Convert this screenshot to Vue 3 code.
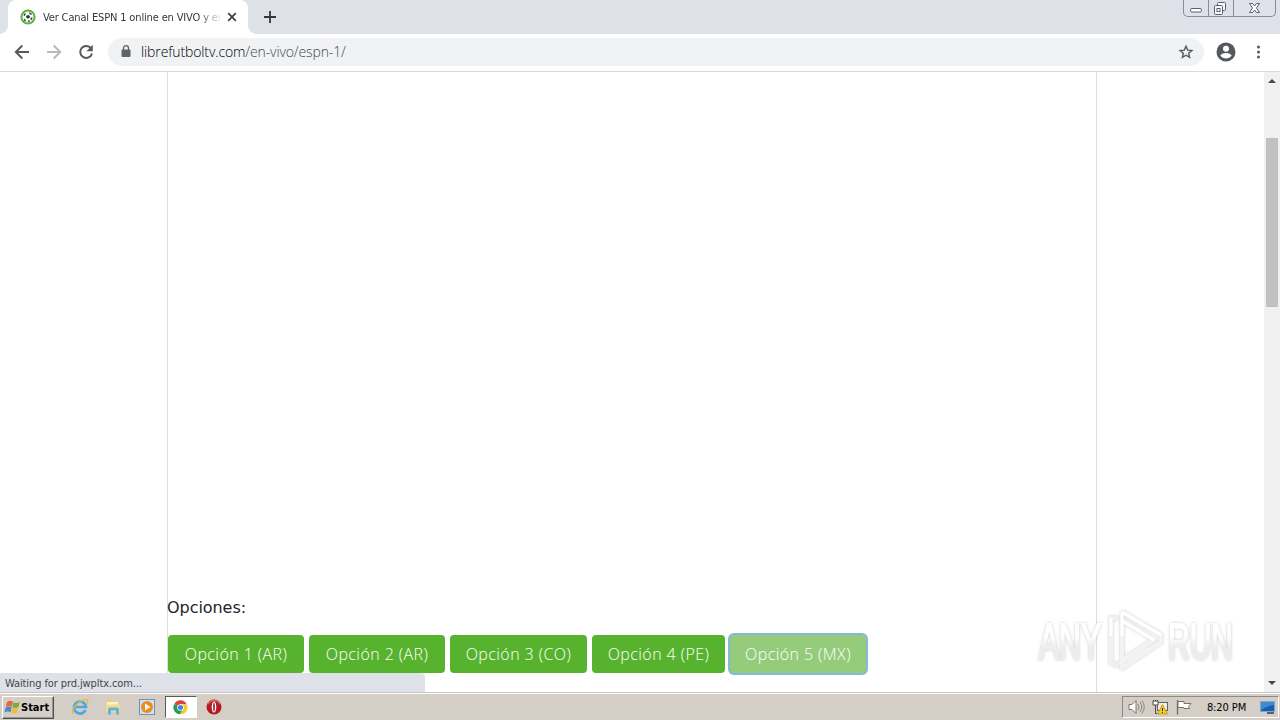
<template>
  <div class="screen">
    <header class="tabstrip">
      <div class="tab">
        <svg class="favicon" width="16" height="16" viewBox="0 0 16 16">
          <circle cx="8" cy="8" r="7.6" fill="#5fac43" />
          <circle cx="8" cy="8" r="5.6" fill="#f6faf4" />
          <path d="M6.300 6.800l1.900-.8 1.700 1-.3 2-2.200.5-1.200-1.200zM3.300 6l1.700-2.100.8 1.200L4.500 7zM9.500 3.200l2.500 1.700-.9 1.100-1.900-1.200zM12.700 8.500l-1.300 2.800-1.100-1.100.9-1.600zM4.100 9.700l1.500 1.400.3 1.600-2.200-1.500zM7.600 11.900l1.900-.6.5 1.300-1.800.5z" fill="#26332a" />
        </svg>
        <span class="tab-title">Ver Canal ESPN 1 online en VIVO y en</span>
        <svg class="tab-close" width="10" height="10" viewBox="0 0 10 10">
          <path d="M1.2 1.2l7.6 7.6M8.8 1.2L1.2 8.8" stroke="#3c4043" stroke-width="1.7" />
        </svg>
        <i class="tab-foot left"></i>
        <i class="tab-foot right"></i>
      </div>
      <svg class="new-tab" width="12" height="12" viewBox="0 0 12 12">
        <path d="M6 0v12M0 6h12" stroke="#34383c" stroke-width="1.8" />
      </svg>
      <div class="window-buttons">
        <svg width="24" height="16" viewBox="0 0 24 16">
          <rect x="6.500" y="8.500" width="11" height="3.500" rx="1.500" fill="#fff" stroke="#596070" />
        </svg>
        <svg width="24" height="16" viewBox="0 0 24 16">
          <rect x="8.500" y="2.500" width="8" height="8" rx="1" fill="#f7f8fa" stroke="#596070" />
          <rect x="5.500" y="5.500" width="8" height="9" rx="1" fill="#f7f8fa" stroke="#596070" />
          <rect x="8" y="8.500" width="3" height="3" fill="#fff" stroke="#596070" />
        </svg>
        <svg width="41" height="16" viewBox="0 0 41 16">
          <path d="M15.500 3.500h3l2 2.500 2-2.500h3l-3 4.500 3 4.500h-3l-2-2.500-2 2.500h-3l3-4.500z" fill="#fff" stroke="#596070" stroke-linejoin="round" />
        </svg>
      </div>
    </header>

    <div class="toolbar">
      <svg class="nav-icon" width="16" height="16" viewBox="0 0 16 16">
        <path d="M15 8H2M8.300 1.500L1.800 8l6.500 6.500" fill="none" stroke="#55585c" stroke-width="1.900" />
      </svg>
      <svg class="nav-icon" width="16" height="16" viewBox="0 0 16 16">
        <path d="M1 8h13M7.700 1.500L14.200 8l-6.500 6.500" fill="none" stroke="#b7b9bc" stroke-width="1.900" />
      </svg>
      <svg class="nav-icon" width="16" height="16" viewBox="0 0 16 16">
        <path d="M13 4.300A6 6 0 1 0 14 9.500" fill="none" stroke="#55585c" stroke-width="2" />
        <path d="M14.800.8v6.400H8.400z" fill="#55585c" />
      </svg>
      <div class="omnibox">
        <svg class="lock" width="10" height="13" viewBox="0 0 10 13">
          <path d="M2.500 5V3.200a2.500 2.500 0 0 1 5 0V5" fill="none" stroke="#5f6368" stroke-width="1.300" />
          <rect x=".5" y="4.500" width="9" height="7.500" rx="1" fill="#5f6368" />
        </svg>
        <span class="url"><span class="host">librefutboltv.com</span><span class="path">/en-vivo/espn-1/</span></span>
        <svg class="star" width="16" height="16" viewBox="0 0 16 16">
          <path d="M8 2.200l1.700 3.900 4.200.4-3.200 2.800.9 4.100L8 11.200l-3.600 2.200.9-4.100-3.200-2.800 4.200-.4z" fill="none" stroke="#55585c" stroke-width="1.400" />
        </svg>
      </div>
      <svg class="avatar" width="20" height="20" viewBox="0 0 20 20">
        <circle cx="10" cy="10" r="9.500" fill="#55585c" />
        <circle cx="10" cy="6.700" r="3" fill="#fff" />
        <path d="M4.300 13.600c1-2 3.500-2.700 5.700-2.700s4.700.7 5.700 2.700a7 7 0 0 1-11.400 0z" fill="#fff" />
      </svg>
      <svg class="kebab" width="4" height="14" viewBox="0 0 4 14">
        <circle v-for="y in [2, 7, 12]" :key="y" cx="2.500" :cy="y" r="1.500" fill="#55585c" />
      </svg>
    </div>

    <div class="viewport">
      <main class="column">
        <p class="label">Opciones:</p>
        <div class="options">
          <button
            v-for="option in options"
            :key="option.text"
            :class="['option', { active: option.active }]"
            :style="{ width: option.width + 'px' }"
          >{{ option.text }}</button>
        </div>
      </main>
      <div class="scrollbar">
        <svg width="8" height="4" viewBox="0 0 8 4"><path d="M0 4l4-4 4 4z" fill="#484848" /></svg>
        <div class="thumb"></div>
        <svg width="8" height="4" viewBox="0 0 8 4"><path d="M0 0l4 4 4-4z" fill="#484848" /></svg>
      </div>
      <div class="status">Waiting for prd.jwpltx.com...</div>
      <svg class="watermark" width="206" height="76" viewBox="0 0 206 76">
        <defs>
          <filter id="soft" x="-10%" y="-10%" width="120%" height="120%">
            <feDropShadow dx="0" dy="0" stdDeviation="1.500" flood-color="#777" flood-opacity=".4" />
          </filter>
          <linearGradient id="fade" x1="0" y1="0" x2="0" y2="1">
            <stop offset=".4" stop-color="#fff" />
            <stop offset=".6" stop-color="#ededed" />
          </linearGradient>
        </defs>
        <g filter="url(#soft)">
          <text x="4" y="55" textLength="62" lengthAdjust="spacingAndGlyphs" class="mark">ANY</text>
          <text x="133" y="55" textLength="65" lengthAdjust="spacingAndGlyphs" class="mark">RUN</text>
          <path d="M83 14H76V59L82 61L122 40" fill="none" stroke="#f1f1f1" stroke-width="4" />
          <path d="M87 8L126 31V38L87 64V56L119 36L87 16V54" fill="none" stroke="#f3f3f3" stroke-width="4" stroke-linejoin="round" />
          <path d="M87 8L126 31M87 17L119 36M87 8V32M76 14V32" fill="none" stroke="#fff" stroke-width="3" />
        </g>
      </svg>
    </div>

    <footer class="taskbar">
      <div class="start">
        <svg width="18" height="17" viewBox="0 0 18 17">
          <path d="M3 3c2-1.500 4-1.500 6-.2L7.800 7.800C5.800 6.500 3.700 6.600 1.700 8z" fill="#e7683b" />
          <path d="M9.500 3.200c2 1 4 1 6.200-.3L14.500 8c-2 1.300-4.200 1.200-6.100.2z" fill="#78ad43" />
          <path d="M1.600 8.500c2-1.400 4.100-1.500 6.100-.2l-1.200 5C4.500 12 2.400 12.100.4 13.500z" fill="#4b8ac7" />
          <path d="M8.300 8.800c2 1 4.100 1 6.100-.2l-1.200 5c-2 1.300-4.200 1.200-6.100.1z" fill="#edbd3d" />
        </svg>
        <span>Start</span>
      </div>
      <nav class="launch">
        <div class="launch-item">
          <svg width="18" height="18" viewBox="0 0 18 18">
            <path d="M14.500 12A6 6 0 1 1 15 9H4" fill="none" stroke="#4aa9dd" stroke-width="2.700" />
            <path d="M2 16C-1 12 9 1 15.500 1.500c2 .2 1.500 3 .3 4.700" fill="none" stroke="#e3b84a" stroke-width="1.300" />
          </svg>
        </div>
        <div class="launch-item">
          <svg width="18" height="18" viewBox="0 0 18 18">
            <path d="M2 2h5l1 1.500h7V14H2z" fill="#e9cf75" />
            <path d="M3 4h11v3H3z" fill="#fff3bb" />
            <path d="M2 6.500h14V14H2z" fill="#f0dc91" />
            <path d="M4 16.500v-5q0-2 2-2h7q2 0 2 2v5h-3v-4H7v4z" fill="#64b4d8" />
          </svg>
        </div>
        <div class="launch-item">
          <svg width="18" height="18" viewBox="0 0 18 18">
            <rect x="1.500" y="1.500" width="15" height="15" fill="#cfe2f0" stroke="#6696bd" />
            <circle cx="9" cy="9" r="6" fill="#f18a1b" />
            <path d="M7 5.500v7l5.500-3.500z" fill="#fff" />
          </svg>
        </div>
        <div class="launch-item pressed">
          <svg width="15" height="15" viewBox="0 0 16 16">
            <path d="M8 8L1.500 4.200A7.200 7.200 0 0 1 14.500 4.500H8z" fill="#dc4437" />
            <path d="M8 8L1.500 4.200A7.200 7.200 0 0 0 7.500 15.200L11 9.500z" fill="#249b59" />
            <path d="M8 4.500h6.500A7.200 7.200 0 0 1 7.500 15.200L11 9.700z" fill="#f7c92f" />
            <circle cx="8" cy="8" r="3.500" fill="#fff" />
            <circle cx="8" cy="8" r="2.700" fill="#4285d8" />
          </svg>
        </div>
        <div class="launch-item">
          <svg width="16" height="16" viewBox="0 0 16 16">
            <circle cx="8" cy="8" r="7.500" fill="#b51a22" />
            <path d="M2 5a7 7 0 0 1 12 0" fill="none" stroke="#df6264" stroke-width="1.500" />
            <ellipse cx="8" cy="8" rx="2.300" ry="5.500" fill="#fff" />
            <ellipse cx="8" cy="8" rx=".8" ry="4.500" fill="#8b1119" />
          </svg>
        </div>
      </nav>
      <div class="tray">
        <svg width="17" height="16" viewBox="0 0 17 16">
          <path d="M1 5.500h3l4-4v13l-4-4H1z" fill="#fff" stroke="#77746f" />
          <path d="M10 5q2 3 0 6M12 3q3.500 5 0 10M14 1.500q4.500 6.500 0 13" fill="none" stroke="#8b8883" />
        </svg>
        <svg width="17" height="16" viewBox="0 0 17 16">
          <rect x="5.500" y="3.500" width="10" height="8" fill="#eee" stroke="#64625e" />
          <path d="M1.500 1v4h4V1M3.500 1v13.500H8" fill="none" stroke="#4d4b48" />
          <path d="M1 2h5v4H1z" fill="#fff" stroke="#4d4b48" />
          <path d="M10.500 5.500l5 9.500h-10z" fill="#f6cb25" stroke="#c69f20" />
          <path d="M10.500 9v3M10.500 13v1" stroke="#333" />
        </svg>
        <svg width="17" height="16" viewBox="0 0 17 16">
          <path d="M1.500 1v14.500" stroke="#6e6b66" stroke-width="1.300" />
          <path d="M2 2.500h6v2h7l-2.500 3 1 2H8v-1H2z" fill="#fff" stroke="#77746f" />
        </svg>
        <span class="clock">8:20 PM</span>
        <svg width="15" height="13" viewBox="0 0 15 13">
          <rect x=".5" y=".5" width="14" height="10" fill="#1760ad" stroke="#80a6cd" />
          <path d="M1 1h13v3Q7 5 1 9z" fill="#3f8bd0" />
          <path d="M7 12h7" stroke="#203e65" stroke-width="1.500" />
        </svg>
      </div>
    </footer>
  </div>
</template>

<script setup>
const options = [
  { text: 'Opción 1 (AR)', width: 136 },
  { text: 'Opción 2 (AR)', width: 136 },
  { text: 'Opción 3 (CO)', width: 137 },
  { text: 'Opción 4 (PE)', width: 133 },
  { text: 'Opción 5 (MX)', width: 136, active: true },
]
</script>

<style>
body {
  margin: 0;
  overflow: hidden;
}
</style>

<style scoped>
.screen {
  width: 1280px;
  height: 720px;
  display: flex;
  flex-direction: column;
  background: #fff;
  font-family: "DejaVu Sans", sans-serif;
  font-stretch: condensed;
  white-space: nowrap;
}

svg {
  display: block;
  flex: none;
}

.tabstrip {
  height: 34px;
  display: flex;
  align-items: flex-start;
  background: #dee1e8;
}

.tab {
  position: relative;
  box-sizing: border-box;
  width: 240px;
  height: 34px;
  margin-left: 8px;
  padding: 0 11px 0 12px;
  display: flex;
  align-items: center;
  background: #fff;
  border-radius: 8px 8px 0 0;
}

.tab-foot {
  position: absolute;
  bottom: 0;
  width: 8px;
  height: 8px;
}

.tab-foot.left {
  left: -8px;
  background: radial-gradient(circle at 0 0, #dee1e8 7.5px, #fff 8px);
}

.tab-foot.right {
  right: -8px;
  background: radial-gradient(circle at 100% 0, #dee1e8 7.5px, #fff 8px);
}

.tab-title {
  width: 177px;
  margin-left: 7px;
  overflow: hidden;
  font-size: 11px;
  letter-spacing: -0.15px;
  color: #34373b;
  -webkit-mask-image: linear-gradient(90deg, #000 155px, transparent 180px);
  mask-image: linear-gradient(90deg, #000 155px, transparent 180px);
}

.tab-close {
  margin-left: 7px;
}

.new-tab {
  margin: 11px 0 0 16px;
}

.window-buttons {
  display: flex;
  height: 16px;
  margin: 0 4px 0 auto;
  border: 1px solid #868c98;
  border-top: none;
  border-radius: 0 0 5px 5px;
}

.window-buttons svg + svg {
  border-left: 1px solid #868c98;
}

.toolbar {
  box-sizing: border-box;
  height: 38px;
  padding: 0 20px 2px 14px;
  display: flex;
  align-items: center;
  border-bottom: 1px solid #d9dadd;
}

.nav-icon {
  margin-right: 16px;
}

.omnibox {
  box-sizing: border-box;
  width: 1096px;
  height: 28px;
  margin-left: -2px;
  padding: 0 10px 0 13px;
  display: flex;
  align-items: center;
  border-radius: 14px;
  background: #f0f2f4;
}

.url {
  margin-left: 10px;
  font-family: "Open Sans", sans-serif;
  font-stretch: normal;
  font-size: 14px;
  letter-spacing: -0.12px;
  font-weight: 300;
}

.host {
  color: #000;
}

.path {
  color: #45494e;
}

.star {
  margin-left: auto;
}

.avatar {
  margin-left: 12px;
}

.kebab {
  margin-left: 20px;
}

.viewport {
  position: relative;
  height: 620px;
  display: flex;
}

.column {
  box-sizing: border-box;
  width: 930px;
  height: 620px;
  margin-left: 167px;
  padding-top: 524px;
  border: solid #dedede;
  border-width: 0 1px;
}

.label {
  margin: 0 0 0 -1px;
  height: 24px;
  line-height: 24px;
  font-size: 16px;
  font-stretch: normal;
  letter-spacing: -0.05px;
  color: #212529;
}

.options {
  display: flex;
  gap: 5px;
  margin-top: 15px;
}

.option {
  height: 38px;
  padding: 0;
  border: none;
  border-radius: 4px;
  background: #57b32d;
  color: #fff;
  font-family: "Open Sans", sans-serif;
  font-weight: 300;
  font-size: 16px;
  letter-spacing: 0.42px;
}

.option.active {
  background: #94cc7b;
  box-shadow: 0 0 0 2px #86b9d8;
}

.scrollbar {
  box-sizing: border-box;
  width: 16px;
  height: 620px;
  margin-left: auto;
  padding: 7px 2px 7px;
  display: flex;
  flex-direction: column;
  align-items: center;
  background: #f1f1f1;
}

.thumb {
  width: 12px;
  height: 169px;
  margin: 55px 0 auto;
  background: #c1c1c1;
}

.status {
  position: absolute;
  left: 0;
  bottom: 0;
  box-sizing: border-box;
  width: 425px;
  height: 19px;
  padding-left: 5px;
  border-radius: 0 4px 0 0;
  background: #dee1e8;
  color: #42464b;
  font-size: 11px;
  line-height: 21px;
  letter-spacing: -0.1px;
}

.watermark {
  position: absolute;
  left: 1035px;
  top: 532px;
  overflow: visible;
}

.mark {
  font-family: "Liberation Sans", sans-serif;
  font-size: 50px;
  fill: url(#fade);
  stroke: url(#fade);
  stroke-width: 1.8px;
}

.taskbar {
  box-sizing: border-box;
  height: 28px;
  padding: 2px 1px 1px 2px;
  display: flex;
  align-items: center;
  background: #d5cec7;
  border-top: 1px solid #c9c6c1;
  box-shadow: inset 0 1px #fff;
}

.start {
  box-sizing: border-box;
  width: 52px;
  height: 23px;
  padding-left: 1px;
  display: flex;
  align-items: center;
  border: 1px solid;
  border-color: #fff #514f4b #514f4b #fff;
  box-shadow: inset -1px -1px #9b958e;
  font-size: 11px;
  font-weight: 700;
  letter-spacing: 0;
  color: #000;
}

.start span {
  margin-left: -1px;
}

.launch {
  display: flex;
  margin-left: 9.500px;
  gap: 1.700px;
}

.launch-item {
  box-sizing: border-box;
  width: 32px;
  height: 22px;
  display: flex;
  align-items: center;
  justify-content: center;
}

.launch-item.pressed {
  background: #fff;
  border: 1px solid;
  border-color: #5b5955 #fff #fff #5b5955;
}

.tray {
  box-sizing: border-box;
  width: 157px;
  height: 22px;
  margin-left: auto;
  padding: 0 3px 0 5px;
  display: flex;
  align-items: center;
  gap: 7px;
  border: 1px solid;
  border-color: #8e8982 #fff #fff #8e8982;
}

.clock {
  margin: 0 auto;
  font-size: 11px;
  letter-spacing: -0.1px;
  color: #000;
}
</style>
